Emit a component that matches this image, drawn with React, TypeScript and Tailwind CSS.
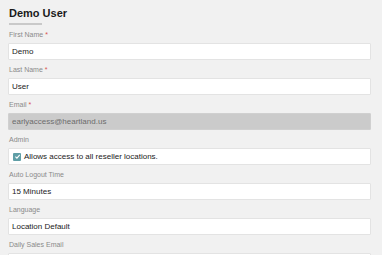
const fields = [
  { label: "First Name", required: true, value: "Demo" },
  { label: "Last Name", required: true, value: "User" },
  { label: "Email", required: true, value: "earlyaccess@heartland.us", disabled: true },
  { label: "Admin", checkbox: true, value: "Allows access to all reseller locations." },
  { label: "Auto Logout Time", value: "15 Minutes" },
  { label: "Language", value: "Location Default" },
  { label: "Daily Sales Email", value: "" },
];

function Check() {
  return (
    <span className="flex h-[8px] w-[8px] items-center justify-center rounded-[1px] bg-[#5f9ea6]">
      <svg viewBox="0 0 10 10" className="h-[7px] w-[7px]">
        <path d="M2 5.2 L4.2 7.3 L8.2 2.8" fill="none" stroke="white" strokeWidth="1.6" />
      </svg>
    </span>
  );
}

export default function App() {
  return (
    <div
      className="h-[255px] w-[382px] overflow-hidden bg-[#f1f1f1] pl-[8px] pr-[11px] pt-[5px]"
      style={{ fontFamily: '"Liberation Sans", Arial, sans-serif' }}
    >
      <h1 className="pl-[1px] text-[11px] font-bold leading-[16px] text-[#1a1a1a]">Demo User</h1>
      <div className="ml-[1px] mt-[2px] h-[2px] w-[33px] bg-[#c9c9c9]" />
      <div className="mt-[5px] flex flex-col gap-[5px]">
        {fields.map((f) => (
          <div key={f.label}>
            <div className="pl-[1px] text-[7px] leading-[10px] text-[#8a8a8a]">
              {f.label}
              {f.required && <span className="text-[#d9534f]"> *</span>}
            </div>
            <div
              className={
                f.disabled
                  ? "mt-[3px] flex h-[17px] items-center rounded-[1px] border border-[#d0d0d0] bg-[#cbcbcb] px-[3px] text-[8px] text-[#6b6b6b]"
                  : "mt-[3px] flex h-[17px] items-center gap-[3px] rounded-[1px] border border-[#e3e3e3] bg-white px-[3px] text-[8px] text-[#222]"
              }
            >
              {f.checkbox && (
                <span className="ml-[1px]">
                  <Check />
                </span>
              )}
              {f.value}
            </div>
          </div>
        ))}
      </div>
    </div>
  );
}
